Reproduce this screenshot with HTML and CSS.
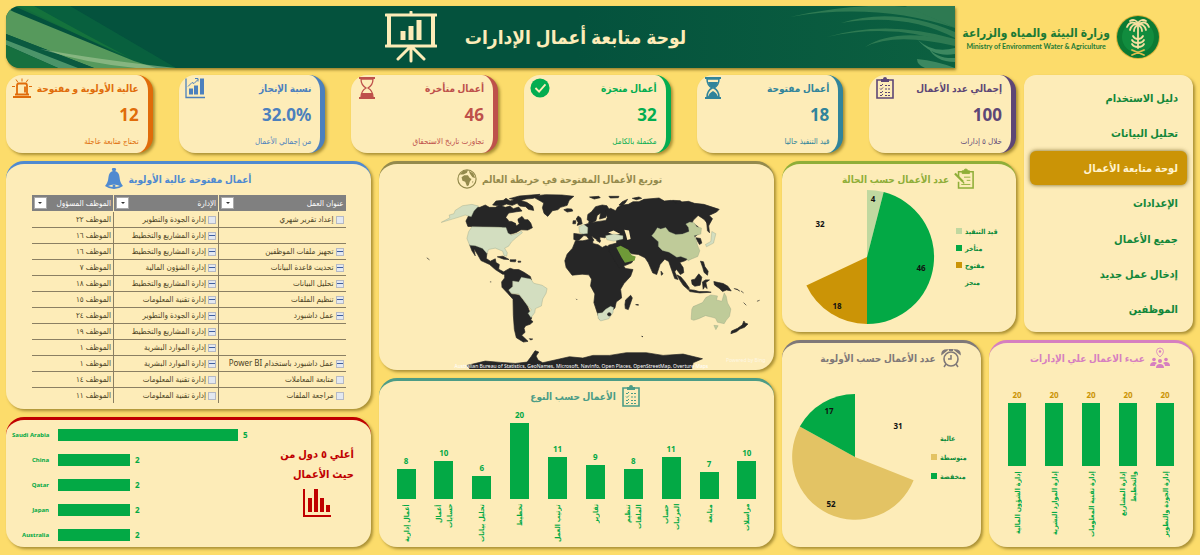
FILE: index.html
```
<!DOCTYPE html>
<html lang="ar" dir="rtl">
<head>
    <meta charset="utf-8">
    <title>لوحة متابعة أعمال الإدارات</title>
    <link rel="stylesheet" href="styles.css">
</head>
<body>

<svg class="defs" aria-hidden="true">
    <symbol id="clipboard" viewBox="0 0 18 22">
        <path d="M1 3h16v18H1z" fill="none" stroke="currentColor" stroke-width="1.6"/>
        <path d="M5 2h2a2 2 0 0 1 4 0h2v3H5z" fill="currentColor"/>
        <path d="M4 8l1 1 2-2M4 11.500l1 1 2-2M4 15l1 1 2-2M4 18l1 1 2-2" fill="none" stroke="currentColor"/>
        <path d="M9 8.500h5M9 12h5M9 15.500h5M9 18.500h5" stroke="currentColor" stroke-width="1.200" stroke-dasharray="2 1"/>
    </symbol>
</svg>

<header class="top">
    <div class="brand">
        <svg class="emblem" viewBox="0 0 46 46">
            <circle cx="23" cy="23" r="22" fill="#d9b23c"/>
            <circle cx="23" cy="23" r="21" fill="#0b7a33"/>
            <circle cx="23" cy="23" r="16" fill="#118c3e"/>
            <g fill="none" stroke="#f5dfa0" stroke-width="1.800" stroke-linecap="round">
                <path d="M23 12v22"/>
                <path d="M23 11c-4-4-9-3-11 2M23 11c4-4 9-3 11 2M23 11c-4-2-7 1-8 5M23 11c4-2 7 1 8 5M23 10c-1-4-5-5-8-3M23 10c1-4 5-5 8-3M23 11c-2 1-4 3-4 6M23 11c2 1 4 3 4 6"/>
                <path d="M23 25c-2 0-4-1-5-3M23 25c2 0 4-1 5-3M23 29c-3 0-5-1-6-3M23 29c3 0 5-1 6-3M23 33c-3 0-5-1-6-3M23 33c3 0 5-1 6-3"/>
                <path d="M17 36l12 5M29 36l-12 5" stroke="#e3bd4e"/>
            </g>
        </svg>
        <div class="brand-text">
            <strong>وزارة البيئة والمياه والزراعة</strong>
            <span>Ministry of Environment Water &amp; Agriculture</span>
        </div>
    </div>
    <div class="banner">
        <svg class="leaves-left" viewBox="0 0 170 62">
            <path d="M14 0h50L170 62h-30z" fill="#0c6a3f" opacity=".6"/>
            <path d="M8 0h20q50 28 96 52z" fill="#1c7f3c" opacity=".6"/>
            <path d="M0 2L8 6 128 55 150 62H88L0 28z" fill="#56995c"/>
            <path d="M0 28l88 34H72L0 34z" fill="#0a5a40"/>
            <path d="M0 34l72 28H52L0 39z" fill="#4b9469"/>
            <path d="M0 39l52 23H0z" fill="#16703f"/>
            <path d="M34 43q60 11 136 19h-40Q84 58 34 43z" fill="#b5d1a4" opacity=".5"/>
        </svg>
        <svg class="leaves-right" viewBox="0 0 170 62">
            <g fill="#2e7a52">
                <path d="M5 11Q70-4 125 1L170 22Q90-4 5 11z"/>
                <path d="M56 17Q120 6 170 32v-6Q110 0 56 17z"/>
                <path d="M42 31q60-18 128 2v6Q110 16 42 31z"/>
                <path d="M80 41q30-20 90-6v5Q110 26 80 41z"/>
                <path d="M120 0h50v22z"/>
                <path d="M133 34q15 14 37 8v6q-22 4-37-14zM143 41q8 12 27 11v4q-20 0-27-15z" fill="#3c8860"/>
                <path d="M132 53q20 2 38 9h-30q-8-3-8-9z" fill="#3c8860"/>
            </g>
        </svg>
        <h1>لوحة متابعة أعمال الإدارات</h1>
        <svg class="board" viewBox="0 0 52 52" fill="none" stroke="#fdecb8" stroke-linecap="round">
            <path d="M1 4h50M1 35h50M26 1v3M26 36v14M24 37L13 48M28 37l11 11" stroke-width="3"/>
            <path d="M4 4v30M48 4v30" stroke-width="4" stroke-linecap="butt"/>
            <path d="M18 20v9M26 15v14M34 9v20" stroke-width="5" stroke-linecap="butt"/>
        </svg>
    </div>
</header>

<main class="dashboard">

    <nav class="side">
        <a href="#">دليل الاستخدام</a>
        <a href="#">تحليل البيانات</a>
        <a href="#" class="active">لوحة متابعة الأعمال</a>
        <a href="#">الإعدادات</a>
        <a href="#">جميع الأعمال</a>
        <a href="#">إدخال عمل جديد</a>
        <a href="#">الموظفين</a>
    </nav>

    <section class="kpis">
        <article class="kpi purple">
            <h2>إجمالي عدد الأعمال</h2>
            <svg class="icon" viewBox="0 0 18 22"><use href="#clipboard"/></svg>
            <b>100</b>
            <small>خلال ٥ إدارات</small>
        </article>
        <article class="kpi teal">
            <h2>أعمال مفتوحة</h2>
            <svg class="icon" viewBox="0 0 18 22">
                <path d="M1 1h16M1 21h16" stroke="currentColor" stroke-width="2"/>
                <path d="M3 2q0 6 5 9-5 3-5 9h12q0-6-5-9 5-3 5-9z" fill="none" stroke="currentColor" stroke-width="1.500"/>
                <path d="M4 5h10q-1 4-5 6-4-2-5-6zM4 20q1-4 5-6 4 2 5 6z" fill="currentColor"/>
            </svg>
            <b>18</b>
            <small>قيد التنفيذ حاليا</small>
        </article>
        <article class="kpi green">
            <h2>أعمال منجزة</h2>
            <svg class="icon" viewBox="0 0 22 22">
                <circle cx="11" cy="11" r="10.500" fill="currentColor"/>
                <path d="M6 11l4 4 7-8" fill="none" stroke="#fdecb8" stroke-width="2"/>
            </svg>
            <b>32</b>
            <small>مكتملة بالكامل</small>
        </article>
        <article class="kpi red">
            <h2>أعمال متأخرة</h2>
            <svg class="icon" viewBox="0 0 18 22">
                <path d="M1 1h16M1 21h16" stroke="currentColor" stroke-width="2"/>
                <path d="M3 2q0 6 5 9-5 3-5 9h12q0-6-5-9 5-3 5-9z" fill="none" stroke="currentColor" stroke-width="1.300"/>
                <path d="M3 20q0-2 1-4h10q1 2 1 4z" fill="currentColor"/>
            </svg>
            <b>46</b>
            <small>تجاوزت تاريخ الاستحقاق</small>
        </article>
        <article class="kpi blue">
            <h2>نسبة الإنجاز</h2>
            <svg class="icon" viewBox="0 0 20 21">
                <path d="M1 1v19h19" fill="none" stroke="currentColor" stroke-width="1.300"/>
                <path d="M6 17v-6M11 17V8M17 17V1" stroke="currentColor" stroke-width="4"/>
                <path d="M3 9l4-4 2 1 4-4M10 1h3v3" fill="none" stroke="currentColor"/>
            </svg>
            <b dir="ltr">32.0%</b>
            <small>من إجمالي الأعمال</small>
        </article>
        <article class="kpi orange">
            <h2>عالية الأولوية و مفتوحة</h2>
            <svg class="icon" viewBox="0 0 20 21">
                <path d="M1 19.500h18" stroke="currentColor" stroke-width="2"/>
                <path d="M3 17h14M5 17V8q0-2 2-2h6q2 0 2 2v9M13 9v6" fill="none" stroke="currentColor" stroke-width="1.800"/>
                <path d="M10 1v3M4 2l2 3M16 2l-2 3M0 9h3M17 9h3" stroke="currentColor"/>
            </svg>
            <b>12</b>
            <small>تحتاج متابعة عاجلة</small>
        </article>
    </section>

    <section class="panel status">
        <h2>
            <svg class="icon" viewBox="0 0 22 22" fill="none" stroke="currentColor">
                <path d="M5 9V3h16v18H5v-7" stroke-width="1.700"/>
                <path d="M9 2h2a2 2 0 0 1 4 0h2v3H9z" fill="currentColor"/>
                <path d="M1 5l9 9" stroke-width="2.500"/>
                <path d="M10 14l1 2" stroke-width="1.500"/>
                <path d="M11 9h7M14 12.500h4M8 17h10"/>
            </svg>
            عدد الأعمال حسب الحالة
        </h2>
        <div class="pie-row">
            <svg class="pie" viewBox="-67 -67 134 134">
                <path d="M0 0V-67A67 67 0 0 1 16.700-64.900z" fill="#c0d8a0"/>
                <path d="M0 0L16.700-64.900A67 67 0 0 1 0 67z" fill="#03a945"/>
                <path d="M0 0V67A67 67 0 0 1-60.600 28.500z" fill="#cb9406"/>
                <text x="6" y="-55">4</text>
                <text x="54" y="14">46</text>
                <text x="-30" y="52">18</text>
                <text x="-47" y="-30">32</text>
            </svg>
            <ul class="legend">
                <li class="pale">قيد التنفيذ</li>
                <li class="leaf">متأخر</li>
                <li class="gold">مفتوح</li>
                <li>منجز</li>
            </ul>
        </div>
    </section>

    <section class="panel map">
        <h2>
            توزيع الأعمال المفتوحة في خريطة العالم
            <svg class="icon" viewBox="0 0 22 22">
                <circle cx="11" cy="11" r="10" fill="none" stroke="currentColor" stroke-width="1.300"/>
                <path d="M5 9l3-2h4l2 3 2 1-2 3-1 4-2 1-2-5-3-1zM3 6l4-4 5-1-1 3-4 2zM13 2l5 3 2 5-3-1-3-4zM17 13l1 1-1 2z" fill="currentColor"/>
            </svg>
        </h2>
        <svg class="world" viewBox="12 112 1182 528">
            <g class="land">
                <path d="M288 165l12-10 14 0 16-7 12 7 18 0 12-6 18 6 14-4 10 8 16-5 10 12-16 2-24 4-8 12 9 13 8 0 11 5 3 9 9-7-6-13 14-9 8 10 10 0 8 10 5 14-14 7-20-1-14 8-16 5-10 2-10-14-8-9-101-2-6-16z"/>
                <path d="M352 148l10-12 22-2 8-6 12 8 20-6 16 6 14 4 18 12 3 12-16-3-8-8-18-2-8-8-14 6-18-4-14 6zM402 129l30-8 62-5-20 12-22 2-20 6-14-4z"/>
                <path d="M470 122l40-5 50 1 35 4-14 12-6 15-20 6-8 7-16 3-14 17-11-9-5-17 4-14-10-6z"/>
                <path d="M565 162l10-3 14 1 3 6-17 3z"/>
                <path d="M283 266l17 2 22 7 13 17-2 16 12 8 15-7 2 11 10 6-2 14 15 8 10-1-3 8-10 0-22-14-17-15-26-12-10-18-11-17 4 21-10-15z"/>
                <path d="M366 303l17-2 18 10-16-1zM404 312l18 0-2 6-15-1zM428 316l8 0 0 3-8 0z"/>
                <path d="M388 346l16-9 12 4 14 0 17 9 18 12 3 10-30-7-6 13-20-2 0 17-12 11 8 10 24 4 12 16 12 16 8 20 5 16-3 6 7 5-9 8-13 4-5 8 3 12-10 9 19 18-14 2-21-13-6-25-3-42-1-48-16-18-17-18-1-16 9-12z"/>
                <path d="M462 548l10 1-6 3zM602 429l2 2zM798 541l4 1zM780 446l8 0 0 2z"/>
                <path d="M600 255l22 0 18-4 12-1 0 13 16 4 12 8 10-5 25 5 7 20 13 25 15 18 22 3-7 20-20 22-10 17 3 26-16 12-4 18-13 13-15 19-18 2-7-20-10-30 3-26-13-24 3-20-8-13-20-2-30 3-18-23-4-20 7-20 16-18z"/>
                <path d="M750 432l15-14 5 8-12 35-9-3-1-12z"/>
                <path d="M595 233l24 3 5 4-12 12-7 3-10-4zM602 190l6-9 8 6 4 17-15 5 3-9zM593 195l8 0-1 9-8 0z"/>
                <path d="M635 192l2-16 11-8 12-15 20-5 14 2 6 10-10 25-18 5 3-18-10 7-4 16-12 6z"/>
                <path d="M625 208l14-5 2-8 8 5 42-6 4-9-5-20 15-7 15 7 6-10 14-7 18-2 14-8 18 0 15-7 45-4 16 9 20-2 20 6 32-3 18 6 28 3 46 15-8 8-22 10 10 10-11 20-14-18-18-12-14 14-4 8 18 12 5 18-15 12-6 10 11 12-10 4-10-12 1 20 7 12-3 14-20 12-15 5 10 15 2 15-10 6-12-16-5 8 10 23-10-3-10-28-8-23-12-7-14 16-10 30-12-5-13-30-10-15-20-10-20-2-20-13 10 15 20 10-10 15-37 15-13-20-17-30-2-18 24-6 0-16-25-8-10 8-15-2 0 13-10-6-15-10 7 13-12 0-10-13-13-3z"/>
                <path d="M730 148l10-10 16-7-8 12-10 8zM642 124l28-2 4 4-18 4zM700 122l30 0-2 4-24 1zM770 128l20-4 8 4-16 4zM890 134l24 1 4 5-20 2zM663 254l12 0-2 6zM856 346l6 8-5 4z"/>
                <path d="M992 195l5 2 4 34-6-6zM960 246l14 2 4 14-7 4-6-10z"/>
                <path d="M903 357l12 6 12 14 14 20-4 4-14-12-10-15zM938 401l18 2 14 4 24 0 12 2-34 2-30-4zM947 372l10-2 12-16 9 10-5 24-16 3-8-6zM980 378l9-6 12 0-11 8 4 18-7-6-5 8zM974 316l9 2 4 14 10 14-2 12-10-8-4-14zM1014 377l14 3 14 3 14 8 10 14-14-3-12 5-10-10-14-10z"/>
                <path d="M1074 398l10 2 8 6M1095 405l8 6M1103 440l8 8M1143 436l8-3M155 306l8 6M344 378l4 0M1104 495l3 6 9 3-10 10-14 5-10 8-17 6 2-8 18-8 14-10z"/>
                <path d="M275 628l30-7 25-6 46 4 44 3 35-4 12-16 12-18 11 4-8 12 6 12 14 8 80-18 40 4 30-8 50 0 50-8 60 0 50 8 60-4 58 14-28 12-5 22-660 0z"/>
            </g>
            <g class="sea">
                <path d="M698 230l16-6 20 11-18 3zM746 222l14 2 5 26-10 3-4-16zM392 186l14-12 22 4-2 22-8 0z"/>
            </g>
            <g class="low">
                <path d="M222 178l14-4 4-10 22-14 28-4 20 5-14 15-8 17-18-5-18 6-20 6-34 10 26-14z"/>
                <path d="M290 213l102 2 6 17 10 6 22-6 8-6 3 5-20 16-13 12-8 12-12 6 8 14-2 10-8-2-4-13-22-9-20 4-5 12-13-15-22-8-17-2-8-20 5-20z"/>
                <path d="M412 375l18 3 8-14 28 5 9 13 25 6 15 10-3 14-10 17-4 21-18 8-2 12-11 15-9-13 10-10-12-14-11-16-15-18-22-2-8-10 12-10z"/>
                <path d="M610 213l15-7 12 9-1 18-14 2-10-5zM690 240l25-5 27 5 0 10-27 6-21-4zM666 472l14-2 10-10 15-9 9 4-2 15-12 18-25 7-7-8zM1008 227l12 7-7 28-21 11-3-7 16-9z"/>
            </g>
            <circle cx="701" cy="475" r="5" class="land"/>
            <g class="mid">
                <path d="M828 240l8-10 9-14 10 4 15-5 10 13 20 8 20-1 20-8-2-12-8-10 12-6 13 2 8 12 14 4-2 18-20 5 6 12 4 16 7 17-6 17-20 8-9 5-4-6-18-7-12 2-23-15-20-5-12-12 0-14z"/>
                <path d="M946 490l2-30 4-8 28-12 10-15 15-8 20 3-3 12 16 4 7-25 6 10 4 20 10 18-4 22-10 12-6 10-20-4-6-12-10-3-20-5-20 9-15 5zM1014 508l13 1-7 12z"/>
            </g>
            <path class="high" d="M722 275l13-5 23 12 10 16 12 4-3 12-29 7-10-16z"/>
            <text class="bing" x="1168" y="618">Powered by Bing</text>
            <text x="238" y="635">Australian Bureau of Statistics, GeoNames, Microsoft, Navinfo, Open Places, OpenStreetMap, Overture Maps</text>
        </svg>
    </section>

    <section class="panel list">
        <h2>
            أعمال مفتوحة عالية الأولوية
            <svg class="icon" viewBox="0 0 18 22">
                <path d="M9 0a1.500 1.500 0 0 1 1 3q4 1 4.500 6 .5 6 3.500 9-4 3-9 3t-9-3q3-3 3.500-9Q4 4 8 3a1.500 1.500 0 0 1 1-3z" fill="currentColor"/>
                <path d="M3 18q6-3 12 0-6 2-12 0z" fill="#fdecb8"/>
                <circle cx="9" cy="18" r="1.500" fill="currentColor"/>
            </svg>
        </h2>
        <table>
            <thead>
                <tr>
                    <th>عنوان العمل<button aria-label="تصفية"></button></th>
                    <th>الإدارة<button aria-label="تصفية"></button></th>
                    <th>الموظف المسؤول<button aria-label="تصفية"></button></th>
                </tr>
            </thead>
            <tbody>
                <tr><td><i class="box"></i>إعداد تقرير شهري</td><td><i class="box"></i>إدارة الجودة والتطوير</td><td>الموظف ٢٢</td></tr>
                <tr><td></td><td><i class="box minus"></i>إدارة المشاريع والتخطيط</td><td>الموظف ١٦</td></tr>
                <tr><td><i class="box minus"></i>تجهيز ملفات الموظفين</td><td><i class="box minus"></i>إدارة المشاريع والتخطيط</td><td>الموظف ١٦</td></tr>
                <tr><td><i class="box minus"></i>تحديث قاعدة البيانات</td><td><i class="box minus"></i>إدارة الشؤون المالية</td><td>الموظف ٧</td></tr>
                <tr><td><i class="box minus"></i>تحليل البيانات</td><td><i class="box minus"></i>إدارة المشاريع والتخطيط</td><td>الموظف ١٨</td></tr>
                <tr><td><i class="box minus"></i>تنظيم الملفات</td><td><i class="box minus"></i>إدارة تقنية المعلومات</td><td>الموظف ١٥</td></tr>
                <tr><td><i class="box minus"></i>عمل داشبورد</td><td><i class="box minus"></i>إدارة الجودة والتطوير</td><td>الموظف ٢٤</td></tr>
                <tr><td></td><td><i class="box minus"></i>إدارة المشاريع والتخطيط</td><td>الموظف ١٩</td></tr>
                <tr><td></td><td><i class="box minus"></i>إدارة الموارد البشرية</td><td>الموظف ١</td></tr>
                <tr><td><i class="box minus"></i>عمل داشبورد باستخدام Power BI</td><td><i class="box minus"></i>إدارة الموارد البشرية</td><td>الموظف ١</td></tr>
                <tr><td><i class="box"></i>متابعة المعاملات</td><td><i class="box"></i>إدارة تقنية المعلومات</td><td>الموظف ١٤</td></tr>
                <tr><td><i class="box"></i>مراجعة الملفات</td><td><i class="box"></i>إدارة تقنية المعلومات</td><td>الموظف ١١</td></tr>
            </tbody>
        </table>
    </section>

    <section class="panel load">
        <h2>
            <svg class="icon" viewBox="0 0 20 20" fill="currentColor">
                <path d="M10 0a3.500 3.500 0 0 1 3.500 3.500Q13.500 6 10 9 6.500 6 6.500 3.500A3.500 3.500 0 0 1 10 0z" fill="none" stroke="currentColor" stroke-width=".8"/>
                <circle cx="10" cy="3.500" r="1.200"/>
                <circle cx="4" cy="11.500" r="1.800"/><circle cx="16" cy="11.500" r="1.800"/><circle cx="10" cy="13" r="2"/>
                <path d="M0 18q0-4 4-4 2 0 3 1-2 1-2 3zM20 18q0-4-4-4-2 0-3 1 2 1 2 3zM6 20q0-4 4-4t4 4z"/>
            </svg>
            عبء الاعمال علي الإدارات
        </h2>
        <div class="columns" dir="ltr">
            <div class="col" style="--v:20"><b>20</b><i></i><span dir="rtl">إدارة الشؤون المالية</span></div>
            <div class="col" style="--v:20"><b>20</b><i></i><span dir="rtl">إدارة الموارد البشرية</span></div>
            <div class="col" style="--v:20"><b>20</b><i></i><span dir="rtl">إدارة تقنية المعلومات</span></div>
            <div class="col" style="--v:20"><b>20</b><i></i><span dir="rtl">إدارة المشاريع<br>والتخطيط</span></div>
            <div class="col" style="--v:20"><b>20</b><i></i><span dir="rtl">إدارة الجودة والتطوير</span></div>
        </div>
    </section>

    <section class="panel priority">
        <h2>
            <svg class="icon" viewBox="0 0 20 20" fill="none" stroke="currentColor">
                <circle cx="10" cy="11" r="7" stroke-width="1.600"/>
                <path d="M10 7v4H7M5 16l-2 3M15 16l2 3" stroke-width="1.500"/>
                <path d="M1 6q0-4 5-4zM19 6q0-4-5-4z" fill="currentColor" stroke-width="1.500"/>
                <path d="M8 2h4" stroke-width="2"/>
            </svg>
            عدد الأعمال حسب الأولوية
        </h2>
        <div class="pie-row">
            <svg class="pie" viewBox="-63 -63 126 126">
                <path d="M0 0L58.600 23.200A63 63 0 1 1-55.200-30.400z" fill="#e3c364"/>
                <path d="M0 0L-55.200-30.400A63 63 0 0 1 0-63z" fill="#03a945"/>
                <text x="-26" y="-43">17</text>
                <text x="43" y="-28">31</text>
                <text x="-24" y="50">52</text>
            </svg>
            <ul class="legend">
                <li>عالية</li>
                <li class="sand">متوسطة</li>
                <li class="leaf">منخفضة</li>
            </ul>
        </div>
    </section>

    <section class="panel type">
        <h2>
            <svg class="icon" viewBox="0 0 18 22"><use href="#clipboard"/></svg>
            الأعمال حسب النوع
        </h2>
        <div class="columns" dir="ltr">
            <div class="col" style="--v:8"><b>8</b><i></i><span dir="rtl">أعمال إدارية</span></div>
            <div class="col" style="--v:10"><b>10</b><i></i><span dir="rtl">أعمال<br>حسابات</span></div>
            <div class="col" style="--v:6"><b>6</b><i></i><span dir="rtl">تحليل بيانات</span></div>
            <div class="col" style="--v:20"><b>20</b><i></i><span dir="rtl">تخطيط</span></div>
            <div class="col" style="--v:11"><b>11</b><i></i><span dir="rtl">ترتيب العمل</span></div>
            <div class="col" style="--v:9"><b>9</b><i></i><span dir="rtl">تقارير</span></div>
            <div class="col" style="--v:8"><b>8</b><i></i><span dir="rtl">تنظيم<br>الملفات</span></div>
            <div class="col" style="--v:11"><b>11</b><i></i><span dir="rtl">حساب<br>المرتبات</span></div>
            <div class="col" style="--v:7"><b>7</b><i></i><span dir="rtl">متابعة</span></div>
            <div class="col" style="--v:10"><b>10</b><i></i><span dir="rtl">مراسلات</span></div>
        </div>
    </section>

    <section class="panel country">
        <div class="country-title">
            <h2>أعلي ٥ دول من<br>حيث الأعمال</h2>
            <svg class="icon" viewBox="0 0 28 28" fill="none" stroke="currentColor">
                <path d="M1 0v27h27" stroke-width="2"/>
                <path d="M7 23V9M13 23V0M19 23V9M25 23v-7" stroke-width="4"/>
            </svg>
        </div>
        <ul class="bars" dir="ltr">
            <li style="--v:5"><span>Saudi Arabia</span><i></i><b>5</b></li>
            <li style="--v:2"><span>China</span><i></i><b>2</b></li>
            <li style="--v:2"><span>Qatar</span><i></i><b>2</b></li>
            <li style="--v:2"><span>Japan</span><i></i><b>2</b></li>
            <li style="--v:2"><span>Australia</span><i></i><b>2</b></li>
        </ul>
    </section>

</main>

</body>
</html>
```
FILE: styles.css
```
* { box-sizing: border-box; }
body { margin: 0; padding: 6px 7px 8px 6px; background: #fcdc6b; font-family: "Noto Sans", "DejaVu Sans Condensed", "DejaVu Sans", sans-serif; font-size: 8px; color: #0b8a3a; }
h1, h2, ul { margin: 0; padding: 0; }
ul { list-style: none; }
i { font-style: normal; }
b { font-weight: bold; }
.defs { display: none; }
.icon { display: block; flex: none; width: 20px; height: 22px; }

/* header */
.top { display: flex; height: 62px; margin-bottom: 7px; }
.brand { width: 238px; flex: none; display: flex; align-items: center; gap: 5px; padding-right: 32px; color: #1c7a35; }
.emblem { width: 46px; height: 46px; flex: none; }
.brand-text { white-space: nowrap; text-align: center; }
.brand-text strong { display: block; font-size: 12px; line-height: 17px; }
.brand-text span { display: block; direction: ltr; font-family: Lato, sans-serif; font-weight: bold; font-size: 7px; line-height: 10px; }
.banner { flex: 1; position: relative; display: flex; align-items: center; justify-content: center; gap: 28px; padding-left: 110px; overflow: hidden; border-radius: 14px 0 0 14px; background: linear-gradient(90deg, #04523d 60%, #0c6040); box-shadow: 1px 2px 3px rgba(90, 70, 0, .6); }
.banner h1 { font-size: 19px; color: #fdecb8; white-space: nowrap; }
.board { width: 52px; height: 52px; }
.leaves-left, .leaves-right { position: absolute; top: 0; height: 62px; width: 170px; }
.leaves-left { left: 0; }
.leaves-right { right: 0; }

/* page grid, first column is the right one */
.dashboard {
    display: grid;
    gap: 8px;
    grid-template-columns: 169fr 27fr 199fr 395fr 365fr;
    grid-template-rows: minmax(78px, auto) minmax(171px, auto) minmax(30px, auto) minmax(31px, auto) minmax(130px, auto);
    grid-template-areas:
        "side kpi kpi kpi kpi"
        "side status status map list"
        "load load priority map list"
        "load load priority type list"
        "load load priority type country";
}
.side { grid-area: side; }
.kpis { grid-area: kpi; }
.status { grid-area: status; color: #8fae38; }
.map { grid-area: map; color: #948a4c; }
.list { grid-area: list; color: #4f8ad0; }
.load { grid-area: load; color: #d67fc0; }
.priority { grid-area: priority; color: #7f7878; }
.type { grid-area: type; color: #4c9c86; }
.country { grid-area: country; color: #c00000; }

/* menu */
.side { display: flex; flex-direction: column; justify-content: space-between; padding: 6px; border-radius: 12px; background: #fdecb8; box-shadow: 2px 2px 3px rgba(90, 70, 0, .5); }
.side a { display: block; padding-right: 9px; border-radius: 6px; font-size: 11px; font-weight: bold; line-height: 34px; color: #12873a; text-decoration: none; }
.side a.active { background: #cb9406; color: #fff3cf; box-shadow: 0 0 4px rgba(90, 70, 0, .8); }

/* kpi cards */
.kpis { display: grid; grid-template-columns: repeat(6, minmax(0, 1fr)); gap: 26px; }
.kpi { display: grid; grid-template-columns: minmax(0, 1fr) auto; grid-template-rows: 26px 28px 24px; align-items: center; padding: 0 9px 0 6px; border-right: 5px solid; border-radius: 16px; background: #fdecb8; box-shadow: 2px 2px 3px rgba(90, 70, 0, .5); }
.kpi h2 { font-size: 10px; line-height: 22px; white-space: nowrap; }
.kpi b { grid-column: 1 / 3; font-size: 17px; line-height: 28px; text-align: right; }
.kpi small { grid-column: 1 / 3; font-size: 8px; line-height: 16px; }
.purple { color: #5d4776; }
.teal { color: #31849b; }
.green { color: #03ad50; }
.red { color: #be514b; }
.blue { color: #4c80bd; }
.orange { color: #e06c0a; }

/* panels */
.panel { min-width: 0; padding: 4px 10px 0; border-top: 3px solid; border-radius: 18px; background: #fdecb8; box-shadow: 2px 2px 3px rgba(90, 70, 0, .5); }
.panel h2 { display: flex; align-items: center; justify-content: center; gap: 5px; padding-left: 18px; font-size: 10px; line-height: 22px; white-space: nowrap; }
.panel.list h2 { padding: 0 22px 0 0; }
.panel.map h2 { padding: 0 34px 0 0; }

.pie-row { display: flex; direction: ltr; align-items: center; }
.pie { flex: none; width: 126px; overflow: visible; }
.pie text { font-size: 8px; font-weight: bold; text-anchor: middle; fill: #111; }
.legend { direction: ltr; margin-left: 13px; font-size: 7px; font-weight: bold; line-height: 19px; white-space: nowrap; color: #0b8a3a; }
.legend li::before { content: ""; display: inline-block; width: 6px; height: 6px; margin-right: 3px; }
.legend .pale::before { background: #c0d8a0; }
.legend .leaf::before { background: #03a945; }
.legend .gold::before { background: #cb9406; }
.legend .sand::before { background: #e3c364; }
.status .pie { width: 134px; margin-left: 8px; }
.status .legend { margin-left: 22px; line-height: 17px; }
.priority .pie-row { margin-top: 24px; padding-top: 1px; }

.map { padding: 4px 0 0; overflow: hidden; }
.world { display: block; width: 100%; margin-top: 3px; }
.land { fill: #262626; stroke: #262626; stroke-width: 2; stroke-linejoin: round; }
.sea { fill: #fdecb8; }
.low { fill: #d3dec0; stroke: #8b9a80; }
.mid { fill: #bfcb99; stroke: #8b9a80; }
.high { fill: #6f9a38; }
.world text { direction: ltr; font-size: 15px; fill: #fff; }
.world .bing { text-anchor: end; opacity: .6; }

/* task table */
table { width: 314px; margin: 5px auto 0; border-collapse: collapse; table-layout: fixed; font-size: 8px; line-height: 14px; color: #4b4223; white-space: nowrap; }
th, td { height: 16px; padding: 0 2px; text-align: right; border-left: 1px solid #8a7f63; border-bottom: 1px solid #8a7f63; font-weight: normal; overflow: hidden; }
th:nth-child(1) { width: 127px; }
th:nth-child(2) { width: 105px; }
th:last-child, td:last-child { border-left: 0; }
tr:last-child td { border-bottom: 0; }
th { background: #808080; color: #fff; border-color: #fdecb8; }
th button { float: left; width: 13px; height: 12px; margin-top: 1px; padding: 0; border: 1px solid #aaa; background: #fff; }
th button::before { content: ""; display: block; width: 0; height: 0; margin: 0 auto; border: solid transparent; border-width: 2px 2px 0; border-top-color: #333; }
.box { display: inline-block; width: 8px; height: 8px; margin-left: 2px; border: 1px solid #b5b9c4; background: #e3e8f0; vertical-align: middle; }
.minus::before { content: ""; display: block; height: 1px; margin-top: 2px; background: #3f5f9f; }

/* column charts */
.columns { display: flex; justify-content: space-between; color: #03a945; }
.col { display: flex; flex-direction: column; justify-content: flex-end; align-items: center; width: 24px; }
.col b { line-height: 16px; }
.col i { width: 19px; background: #03a945; }
.col span { height: 42px; margin-top: 5px; writing-mode: vertical-rl; transform: rotate(180deg); text-align: start; font-size: 7px; font-weight: bold; line-height: 11px; white-space: nowrap; }
.type .columns { padding: 0 5px; }
.type .col i { height: calc(var(--v) * 38px / 10); }
.load .columns { padding: 0 6px; margin-top: 18px; }
.load .col i { width: 18px; height: calc(var(--v) * 63px / 20); }
.load .col b { color: #cb9406; }
.load .col span { height: 70px; }

/* countries */
.country { display: flex; justify-content: space-between; padding: 2px 17px 0 6px; }
.country-title { display: flex; flex-direction: column; align-items: center; padding-top: 22px; }
.panel.country h2 { display: block; padding: 0; font-size: 11px; line-height: 20px; }
.country-title .icon { width: 28px; height: 28px; margin-top: 5px; }
.bars { flex: 1; color: #03a945; font-weight: bold; }
.bars li { display: flex; align-items: center; height: 25px; }
.bars span { width: 37px; margin-right: 9px; text-align: right; white-space: nowrap; font-size: 6px; }
.bars i { width: calc(var(--v) * 36px); height: 12px; margin-right: 5px; background: #03a945; }
```
